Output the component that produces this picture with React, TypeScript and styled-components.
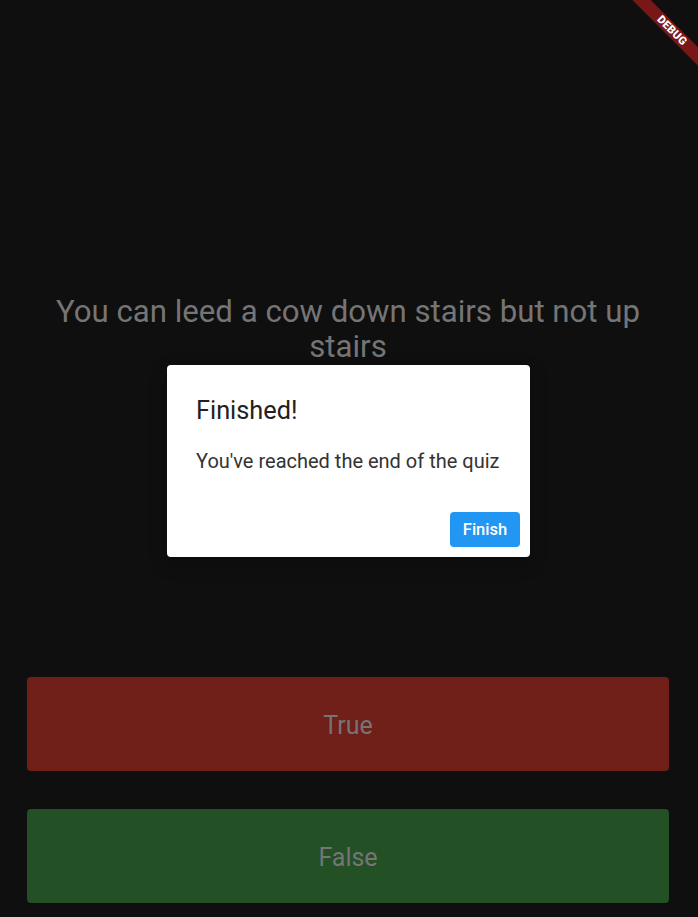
import React from "react";
import styled, { createGlobalStyle } from "styled-components";

const Global = createGlobalStyle`
  html, body { margin: 0; padding: 0; background: #0f0f0f; }
  body { font-family: Roboto, "Noto Sans", "Liberation Sans", sans-serif; overflow: hidden; }
  * { box-sizing: border-box; }
`;

const Page = styled.div`
  position: relative;
  width: 100vw;
  height: 100vh;
  overflow: hidden;
  background: #0f0f0f;
  display: flex;
  flex-direction: column;
  padding: 0 29px 14px 27px;
`;

const QuestionArea = styled.div`
  flex: 1;
  display: flex;
  align-items: center;
  justify-content: center;
`;

const Question = styled.p`
  margin: -19px 0 0;
  text-align: center;
  color: #757575;
  font-size: 31.2px;
  line-height: 35px;
`;

const AnswerButton = styled.button<{ $tone: string; $gap: number }>`
  height: 94px;
  margin-top: ${(p) => p.$gap}px;
  padding: 2px 0 0;
  border: none;
  border-radius: 4px;
  background: ${(p) => p.$tone};
  color: #757575;
  font-family: Roboto, "Noto Sans", sans-serif;
  font-size: 25px;
  cursor: pointer;
`;

const Overlay = styled.div`
  position: absolute;
  inset: 0;
  display: flex;
  align-items: center;
  justify-content: center;
  padding-top: 5px;
  padding-right: 1px;
`;

const Dialog = styled.div`
  width: 363px;
  height: 192px;
  background: #ffffff;
  border-radius: 4px;
  box-shadow: 0 6px 18px rgba(0, 0, 0, 0.25);
  display: flex;
  flex-direction: column;
  padding: 31px 10px 10px 29px;
`;

const Title = styled.h2`
  margin: 0;
  font-size: 25.3px;
  font-weight: 400;
  line-height: 30px;
  color: #212121;
`;

const Content = styled.p`
  margin: 23px 0 0;
  font-size: 20px;
  line-height: 24px;
  color: #333333;
`;

const Actions = styled.div`
  margin-top: auto;
  display: flex;
  justify-content: flex-end;
`;

const FinishButton = styled.button`
  width: 70px;
  height: 35px;
  border: none;
  border-radius: 4px;
  background: #2196f3;
  color: #ffffff;
  font-family: Roboto, "Noto Sans", sans-serif;
  font-size: 16.5px;
  font-weight: 500;
  padding: 0;
`;

const Ribbon = styled.div`
  position: absolute;
  left: 612px;
  top: 23.5px;
  width: 120px;
  height: 13px;
  background: #781717;
  transform: rotate(45deg);
  display: flex;
  align-items: center;
  justify-content: center;
  color: #ffffff;
  font-family: Roboto, "Noto Sans", sans-serif;
  font-weight: 900;
  font-size: 11.2px;
  line-height: 1;
  letter-spacing: 0.2px;
`;

export default function App() {
  return (
    <>
      <Global />
      <Page>
        <QuestionArea>
          <Question>
            You can leed a cow down stairs but not up
            <br />
            stairs
          </Question>
        </QuestionArea>
        <AnswerButton $tone="#701f19" $gap={0}>True</AnswerButton>
        <AnswerButton $tone="#235025" $gap={38}>False</AnswerButton>
        <Overlay>
          <Dialog>
            <Title>Finished!</Title>
            <Content>You've reached the end of the quiz</Content>
            <Actions>
              <FinishButton>Finish</FinishButton>
            </Actions>
          </Dialog>
        </Overlay>
        <Ribbon>DEBUG</Ribbon>
      </Page>
    </>
  );
}
